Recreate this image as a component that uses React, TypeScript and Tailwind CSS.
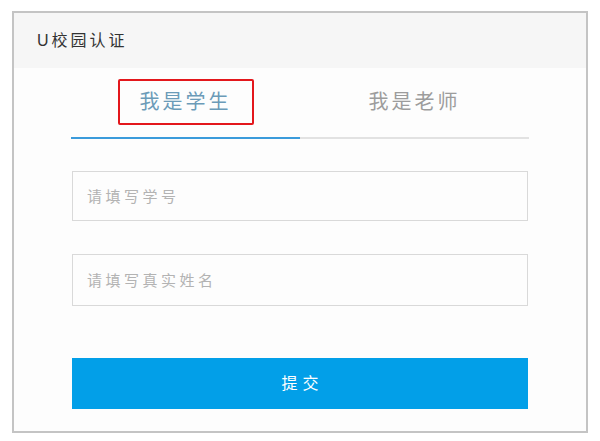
import { useState } from 'react';

const CJK = "font-['Liberation_Sans','Noto_Sans_CJK_SC',sans-serif]";

export default function App() {
  const [tab, setTab] = useState<'student' | 'teacher'>('student');

  return (
    <div className={`min-h-[441px] w-[600px] bg-white pl-[12px] pt-[11px] ${CJK}`}>
      <div className="flex h-[422px] w-[576px] flex-col border-2 border-[#c4c4c4] bg-[#fdfdfd]">
        {/* header */}
        <div className="flex h-[55px] items-center bg-[#f6f6f6] pl-[23px] text-[16px] tracking-[3px] text-[#333]">
          U校园认证
        </div>

        <div className="flex flex-col px-[57px]">
          {/* tabs */}
          <div className="mt-[11px] flex">
            <button
              onClick={() => setTab('student')}
              className={`flex flex-1 justify-center border-b-2 pb-[12px] ${
                tab === 'student' ? 'border-[#3b9bdb]' : 'border-[#e2e2e2]'
              }`}
            >
              <span
                className={`inline-block rounded-[2px] border-2 border-[#e3171c] px-[20px] py-[10px] font-['Liberation_Serif','Noto_Sans_CJK_SC',serif] text-[20px] leading-[22px] tracking-[3px] ${
                  tab === 'student' ? 'text-[#6b9bb8]' : 'text-[#9c9c9c]'
                }`}
              >
                我是学生
              </span>
            </button>
            <button
              onClick={() => setTab('teacher')}
              className={`flex flex-1 justify-center border-b-2 pb-[12px] ${
                tab === 'teacher' ? 'border-[#3b9bdb]' : 'border-[#e2e2e2]'
              }`}
            >
              <span
                className={`inline-block border-2 border-transparent px-[20px] py-[10px] font-['Liberation_Serif','Noto_Sans_CJK_SC',serif] text-[20px] leading-[22px] tracking-[3px] ${
                  tab === 'teacher' ? 'text-[#6b9bb8]' : 'text-[#9c9c9c]'
                }`}
              >
                我是老师
              </span>
            </button>
          </div>

          {/* form */}
          <input
            placeholder="请填写学号"
            className="mx-[1px] mt-[32px] h-[50px] border border-[#d9d9d9] bg-[#fdfdfd] px-[14px] text-[15px] tracking-[3.5px] text-[#555] outline-none placeholder:text-[#b3b3b3]"
          />
          <input
            placeholder="请填写真实姓名"
            className="mx-[1px] mt-[33px] h-[52px] border border-[#d9d9d9] bg-[#fdfdfd] px-[14px] text-[15px] tracking-[3.5px] text-[#555] outline-none placeholder:text-[#b3b3b3]"
          />
          <button className="mx-[1px] mt-[52px] h-[51px] bg-[#029fe8] pl-[5px] text-[16px] tracking-[5px] text-white">
            提交
          </button>
        </div>
      </div>
    </div>
  );
}
